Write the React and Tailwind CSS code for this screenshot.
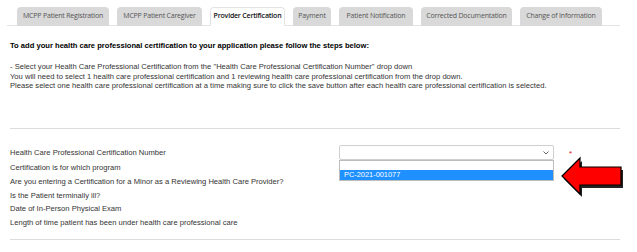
import React from 'react';

const tabs = [
    { label: 'MCPP Patient Registration', w: 'w-[92px]' },
    { label: 'MCPP Patient Caregiver', w: 'w-[85px]' },
    { label: 'Provider Certification', w: 'w-[75px]', active: true },
    { label: 'Payment', w: 'w-[38px]' },
    { label: 'Patient Notification', w: 'w-[74px]' },
    { label: 'Corrected Documentation', w: 'w-[91px]' },
    { label: 'Change of Information', w: 'w-[82px]' },
];

const questions = [
    'Certification is for which program',
    'Are you entering a Certification for a Minor as a Reviewing Health Care Provider?',
    'Is the Patient terminally ill?',
    'Date of In-Person Physical Exam',
    'Length of time patient has been under health care professional care',
];

// red callout arrow pointing at the dropdown option
const CalloutArrow = () => (
    <svg width="66" height="42" viewBox="0 0 66 42" className="absolute left-[560px] top-[156px]">
        <polygon points="4,23 22,5 22,14 63,14 63,32 22,32 22,41" fill="#222" />
        <polygon points="2,20 20,2 20,11 61,11 61,29 20,29 20,38" fill="#ff0000" stroke="#000" strokeWidth="1.2" strokeLinejoin="miter" />
    </svg>
);

const App = () => {
    return (
        <div className="relative w-[637px] h-[252px] overflow-hidden bg-white font-['Liberation_Sans',Arial,sans-serif] text-[#222]">
            {/* Tabs */}
            <div className="mt-[7px] ml-[7px] w-[613px] flex gap-[8px] pl-[10px] border-b border-[#e3e3e3]">
                {tabs.map(t => (
                    <div
                        key={t.label}
                        className={`${t.w} h-[19px] -mb-px flex items-center justify-center rounded-t-[4px] whitespace-nowrap font-['Open_Sans',sans-serif] text-[7px] tracking-[-0.2px] ${t.active ? 'bg-white border border-[#e3e3e3] border-b-white text-[#111] font-semibold' : 'bg-[#d9d9d9] text-[#555]'}`}
                    >
                        {t.label}
                    </div>
                ))}
            </div>

            {/* Instructions */}
            <div className="px-[10px] pt-[15px] text-[7.6px] leading-[9px]">
                <p className="font-bold text-black">To add your health care professional certification to your application please follow the steps below:</p>
                <p className="mt-[12px] text-[#333]">- Select your Health Care Professional Certification from the "Health Care Professional Certification Number" drop down</p>
                <p className="mt-[1px] text-[#333]">You will need to select 1 health care professional certification and 1 reviewing health care professional certification from the drop down.</p>
                <p className="text-[#333]">Please select one health care professional certification at a time making sure to click the save button after each health care professional certification is selected.</p>
            </div>

            <div className="mt-[38px] ml-[10px] w-[610px] border-t border-[#dcdcdc]" />

            {/* Form */}
            <div className="px-[10px] pt-[16px] text-[7.6px] text-[#333]">
                <div className="flex items-center h-[15px]">
                    <span className="w-[329px]">Health Care Professional Certification Number</span>
                    <div className="relative w-[215px] h-[15px] rounded-[2px] border border-[#cfcfcf] bg-white">
                        <svg width="6" height="4" viewBox="0 0 6 4" className="absolute right-[4px] top-[5px]">
                            <path d="M0.5 0.5 L3 3 L5.5 0.5" fill="none" stroke="#555" strokeWidth="0.9" />
                        </svg>
                        {/* open dropdown list */}
                        <div className="absolute left-[-1px] top-[14px] w-[215px] border border-[#bdbdbd] bg-white">
                            <div className="h-[9px]" />
                            <div className="h-[10px] bg-[#1e90ff] text-white pl-[4px] leading-[10px] text-[7.4px]">PC-2021-001077</div>
                        </div>
                    </div>
                    <span className="ml-[15px] mt-[3px] text-[#e0101a] text-[8px] leading-none">*</span>
                </div>
                <div className="pt-[1px] leading-[13.8px]">
                    {questions.map(q => (
                        <p key={q}>{q}</p>
                    ))}
                </div>
            </div>

            <div className="mt-[9px] ml-[10px] w-[610px] border-t border-[#dcdcdc]" />

            <CalloutArrow />
        </div>
    );
};

export default App;
